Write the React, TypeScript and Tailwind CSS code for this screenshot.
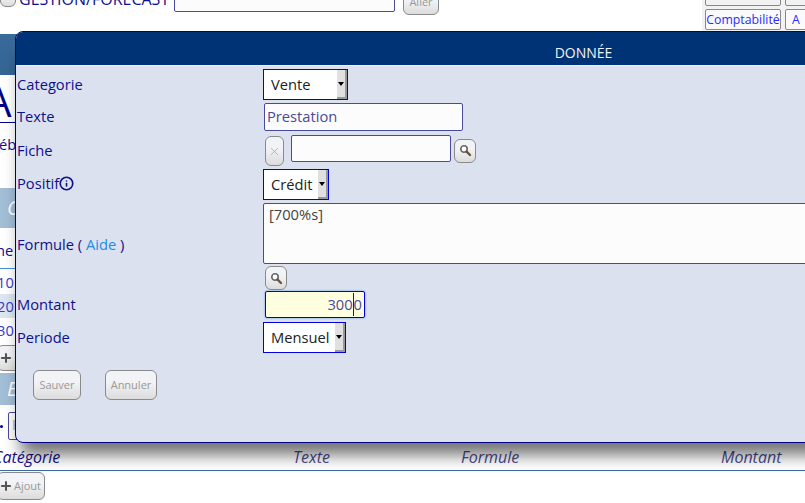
import { Plus, Info, X } from "lucide-react";

const font = { fontFamily: '"Open Sans", "Noto Sans", sans-serif' };

const btn =
  "rounded-[6px] border border-[#8a8a8a] bg-gradient-to-b from-[#f2f3f6] from-40% to-[#dcdcdc] text-[#999] text-[11px] flex items-center justify-center";

const inputCls =
  "rounded-[2px] border border-[#4a4a9a] bg-[#fcfcfc] text-[#4a4a9a] text-[14.7px]";

const SelectBox = ({ label, width }: { label: string; width: string }) => {
  return (
    <div className={`flex h-[31px] border border-[#0000dd] bg-white ${width}`}>
      <span className="flex-1 pl-[7px] text-[14.7px] leading-[29px] text-[#222]">{label}</span>
      <span className="flex w-[10px] items-center justify-center border-r-2 border-b-2 border-[#999] bg-[#e0e0e0]">
        <span className="h-0 w-0 border-x-[3px] border-t-[4px] border-x-transparent border-t-black" />
      </span>
    </div>
  );
};

const SearchBtn = () => {
  return (
    <div className={`${btn} h-[24px] w-[22px]`}>
      <svg width="13" height="13" viewBox="0 0 13 13" fill="none">
        <circle cx="5" cy="5" r="3.2" stroke="#666" strokeWidth="1.6" fill="#fff" />
        <line x1="7.6" y1="7.6" x2="11" y2="11" stroke="#6e5238" strokeWidth="2.4" strokeLinecap="round" />
      </svg>
    </div>
  );
};

const Label = ({ children, className = "" }: { children: React.ReactNode; className?: string }) => {
  return <div className={`w-[247px] shrink-0 pl-[1px] text-[14.7px] text-[#10108c] ${className}`}>{children}</div>;
};

const Modal = () => {
  return (
    <div className="absolute top-[31px] left-[15px] h-[412px] w-[1000px] rounded-tl-[8px] rounded-bl-[8px] border border-[#00008b] bg-[#dbe1ef] shadow-[0_18px_16px_-6px_rgba(0,0,0,0.55)]">
      <div className="h-[33px] w-[998px] rounded-tl-[7px] bg-[#003375] pt-[11px] text-[14px] leading-[20px] text-[#f4f4f4]">
        <div className="w-[1135px] text-center">DONNÉE</div>
      </div>
      <div className="h-px bg-[#eee]" />

      <div className="flex flex-col pt-[3px]">
        <div className="flex h-[31px] items-center">
          <Label>Categorie</Label>
          <SelectBox label="Vente" width="w-[85px]" />
        </div>
        <div className="mt-[3px] flex h-[28px] items-center">
          <Label className="-mt-[2px]">Texte</Label>
          <input readOnly value="Prestation" className={`${inputCls} ml-px h-[28px] w-[199px] px-[2px] pb-[2px]`} />
        </div>
        <div className="mt-[5px] flex h-[30px] items-center">
          <Label className="-mt-[2px]">Fiche</Label>
          <div className={`${btn} ml-[2px] h-[30px] w-[19px]`}>
            <X size={13} strokeWidth={1.2} />
          </div>
          <input readOnly className={`${inputCls} ml-[7px] -mt-[5px] h-[27px] w-[160px]`} />
          <div className="ml-[3px] -mt-px">
            <SearchBtn />
          </div>
        </div>
        <div className="mt-[3px] flex h-[31px] items-center">
          <Label className="-mt-[2px] flex items-center">
            Positif
            <Info size={15} strokeWidth={2.6} className="text-[#10108c]" />
          </Label>
          <SelectBox label="Crédit" width="w-[66px]" />
        </div>
        <div className="mt-[3px] flex">
          <Label className="pt-[30px]">
            Formule ( <span className="text-[#1e8ce6]">Aide</span> )
          </Label>
          <div className="flex flex-col">
            <div className={`${inputCls} h-[61px] w-[700px] px-[5px] leading-[20px] text-[#444]`}>[700%s]</div>
            <div className="mt-[2px] ml-[2px]">
              <SearchBtn />
            </div>
          </div>
        </div>
        <div className="mt-px flex h-[27px] items-center">
          <Label>Montant</Label>
          <div className="ml-[2px] flex h-[27px] w-[100px] items-center justify-end rounded-[2px] border border-[#0000dd] bg-[#ffffe0] pr-[2px] text-[14.7px] text-[#4a4a9a] shadow-[0_0_2px_#4a90e2]">
            300<span className="border-l border-[#1a1a8c]">0</span>
          </div>
        </div>
        <div className="mt-[4px] flex h-[31px] items-center">
          <Label>Periode</Label>
          <SelectBox label="Mensuel" width="w-[83px]" />
        </div>
        <div className="mt-[17px] ml-[17px] flex gap-[24px]">
          <div className={`${btn} h-[30px] w-[48px]`}>Sauver</div>
          <div className={`${btn} h-[30px] w-[52px]`}>Annuler</div>
        </div>
      </div>
    </div>
  );
};

const Background = () => {
  return (
    <div className="flex h-full flex-col text-[14.7px] text-[#10108c]">
      <div className="flex h-[31px] items-start">
        <div className="flex w-[702px] shrink-0 items-start">
          <div className={`${btn} -mt-[10px] h-[17px] w-[16px]`} />
          <span className="-mt-[10px] ml-[3px] w-[155px] shrink-0 text-[16px] leading-[18px] whitespace-nowrap">
            GESTION/FORECAST
          </span>
          <input readOnly className={`${inputCls} -mt-[10px] h-[22px] w-[221px]`} />
          <div className={`${btn} -mt-[10px] ml-[8px] h-[25px] w-[36px]`}>Aller</div>
        </div>
        <div className="flex h-[31px] w-[103px] shrink-0 flex-col gap-[3px] bg-[#f2f2f2] pl-[3px]">
          <div className="-mt-[14px] flex gap-[4px]">
            <div className="h-[20px] w-[76px] shrink-0 rounded-[2px] border border-[#888]" />
            <div className="h-[20px] w-[40px] shrink-0 rounded-[2px] border border-[#888]" />
          </div>
          <div className="flex gap-[4px]">
            <div className="h-[21px] w-[76px] shrink-0 rounded-[2px] border border-[#888] bg-[#fafafa] text-center text-[12.3px] leading-[19px] text-[#2a2aff]">
              Comptabilité
            </div>
            <div className="h-[21px] w-[40px] shrink-0 rounded-[2px] border border-[#888] bg-[#fafafa] pl-[6px] text-[12.3px] leading-[19px] text-[#2a2aff]">
              A
            </div>
          </div>
        </div>
      </div>

      <div className="mt-[3px] h-[41px] bg-gradient-to-b from-[#3a6a9c] to-[#356595]" />
      <div className="h-[48px] border-b border-[#00008b] text-[42px] leading-[52px] text-[#00008b]">
        <span className="-ml-[15px] block">A</span>
      </div>
      <div className="mt-[12px] -ml-[1px] leading-[19px]">éb</div>
      <div className="mt-[34px] flex h-[40px] items-center bg-[#a2bdd6] pl-[7px] text-xl text-white italic">C</div>
      <div className="mt-[12px] -ml-[4px] leading-[20px]">he</div>
      <div className="mt-[8px] h-px bg-[#4a90d2]" />
      <div className="mt-px flex flex-col text-[#3a3ac8]">
        <div className="h-[24px] leading-[24px]">
          <span className="-ml-[3px] block">10</span>
        </div>
        <div className="h-[24px] bg-[#dbe6f2] leading-[24px]">
          <span className="-ml-[3px] block">20</span>
        </div>
        <div className="h-[24px] leading-[24px]">
          <span className="-ml-[3px] block">30</span>
        </div>
      </div>
      <div className="mt-[3px] flex">
        <div className={`${btn} -ml-[3px] h-[26px] w-[30px] justify-start pl-[1px]`}>
          <Plus size={14} strokeWidth={3.5} className="text-[#555]" />
        </div>
      </div>
      <div className="mt-[2px] flex h-[32px] items-center bg-[#a2bdd6] pl-[7px] text-xl text-white italic">E</div>
      <div className="mt-[7px] flex h-[28px] items-center">
        <span className="h-[3px] w-[3px] rounded-full bg-[#00008b]" />
        <div className={`${inputCls} ml-[5px] h-[28px] w-[30px] pl-[3px] text-[#aaa]`}>P</div>
      </div>
      <div className="mt-[5px] flex h-[26px] items-center border-b border-[#3a6a9c] pb-[2px] text-[16px] italic">
        <span className="-ml-[7px] w-[300px] text-[#10108c]">Catégorie</span>
        <span className="w-[168px] text-[#4a4a8c]">Texte</span>
        <span className="w-[260px] text-[#4a4a8c]">Formule</span>
        <span className="text-[#4a4a8c]">Montant</span>
      </div>
      <div className="mt-px flex">
        <div className={`${btn} -ml-[3px] h-[28px] w-[48px] gap-px pr-[2px]`}>
          <Plus size={14} strokeWidth={3.5} className="text-[#555]" />
          Ajout
        </div>
      </div>
    </div>
  );
};

export default function App() {
  return (
    <div style={font} className="relative h-[503px] w-[805px] overflow-hidden bg-white">
      <Background />
      <Modal />
    </div>
  );
}
